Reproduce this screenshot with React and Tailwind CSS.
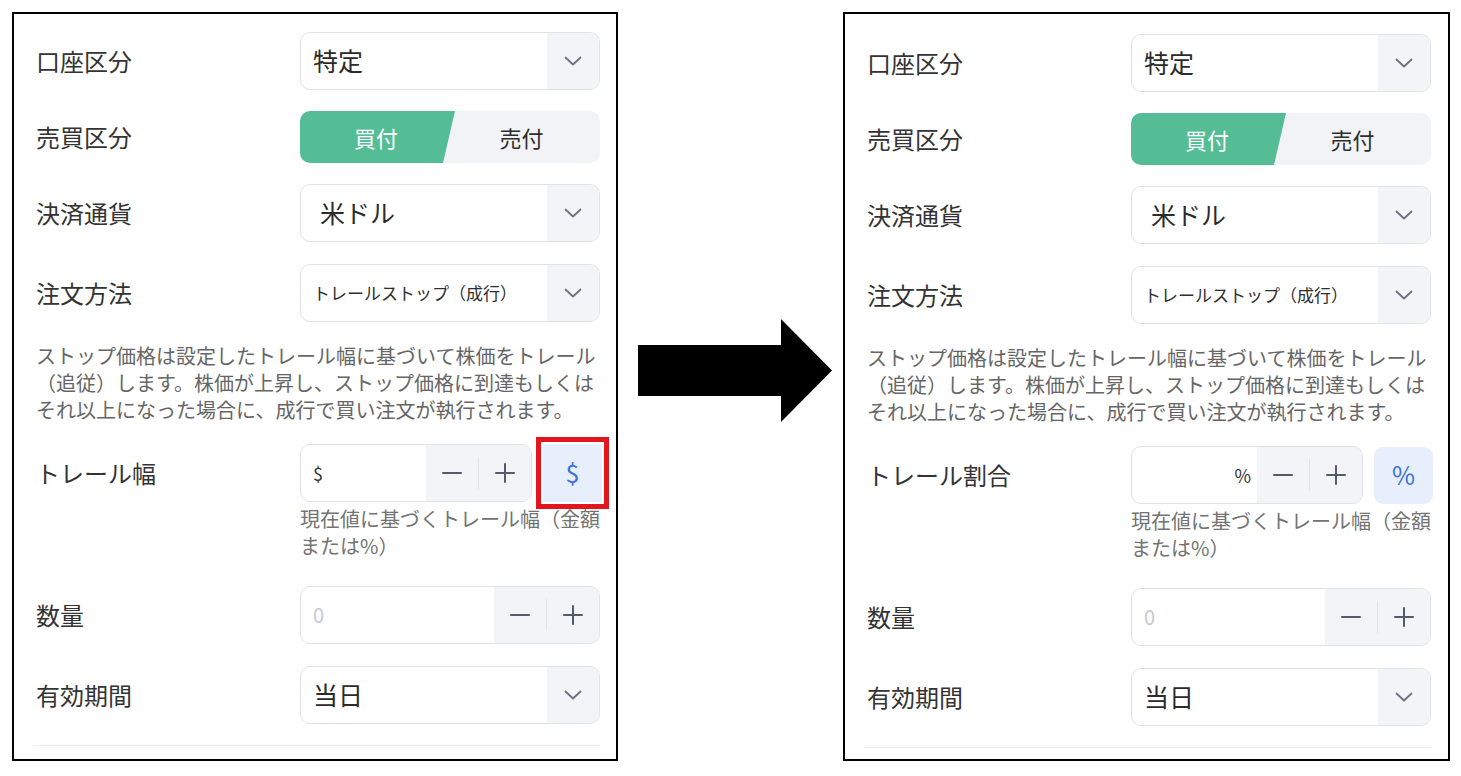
import React from "react";

function Chevron() {
  return (
    <svg width="18" height="10" viewBox="0 0 18 10" fill="none">
      <path d="M1.5 1.5L9 8.5L16.5 1.5" stroke="#6b7280" strokeWidth="1.8" strokeLinecap="round" strokeLinejoin="round" />
    </svg>
  );
}

function Minus() {
  return (
    <svg width="20" height="20" viewBox="0 0 20 20" fill="none">
      <path d="M1 10H19" stroke="#555b66" strokeWidth="2" strokeLinecap="round" />
    </svg>
  );
}

function Plus() {
  return (
    <svg width="20" height="20" viewBox="0 0 20 20" fill="none">
      <path d="M1 10H19M10 1V19" stroke="#555b66" strokeWidth="2" strokeLinecap="round" />
    </svg>
  );
}

function Label({ children }) {
  return <div className="w-[264px] shrink-0 text-[24px] leading-none text-[#333333]">{children}</div>;
}

function Select({ value, small, wide }) {
  return (
    <div className="flex h-[58px] w-[300px] overflow-hidden rounded-[10px] border border-[#e0e2e7] bg-white">
      <div
        className={
          small
            ? "flex flex-1 items-center pl-[12px] text-[17px] text-[#2e2e2e]"
            : wide
            ? "flex flex-1 items-center pl-[19px] text-[25px] text-[#2b2b2b]"
            : "flex flex-1 items-center pl-[12px] text-[25px] text-[#2b2b2b]"
        }
      >
        {value}
      </div>
      <div className="flex w-[52px] items-center justify-center bg-[#f3f4f7]">
        <Chevron />
      </div>
    </div>
  );
}

function Stepper() {
  return (
    <div className="flex w-[105px] items-center bg-[#f3f4f7]">
      <div className="flex flex-1 items-center justify-center">
        <Minus />
      </div>
      <div className="h-[32px] w-px bg-[#e2e4e8]" />
      <div className="flex flex-1 items-center justify-center">
        <Plus />
      </div>
    </div>
  );
}

function Row({ label, children, className }) {
  return (
    <div className={"flex items-center " + className}>
      <Label>{label}</Label>
      {children}
    </div>
  );
}

function Panel({ percent, className }) {
  return (
    <div
      className={
        "h-[749px] shrink-0 border-2 border-black bg-white pl-[22px] pr-[16px] font-['Noto_Sans_CJK_JP','Noto_Sans',sans-serif] " +
        className
      }
    >
      <Row label="口座区分" className="">
        <Select value="特定" />
      </Row>
      <Row label="売買区分" className="mt-[21px]">
        <div className="flex h-[52px] w-[300px] overflow-hidden rounded-[10px] bg-[#f2f3f6]">
          <div className="flex w-[155px] items-center justify-center bg-[#54bd95] pr-[3px] text-[22px] text-white [clip-path:polygon(0_0,100%_0,calc(100%-12px)_100%,0_100%)]">
            買付
          </div>
          <div className="-ml-[12px] flex flex-1 items-center justify-center text-[22px] text-[#2e2e2e]">売付</div>
        </div>
      </Row>
      <Row label="決済通貨" className="mt-[21px]">
        <Select value="米ドル" wide />
      </Row>
      <Row label="注文方法" className="mt-[22px]">
        <Select value="トレールストップ（成行）" small />
      </Row>
      <div className="mt-[20px] whitespace-nowrap text-[20px] leading-[27px] text-[#666666]">
        <div>ストップ価格は設定したトレール幅に基づいて株価をトレール</div>
        <div>（追従）します。株価が上昇し、ストップ価格に到達もしくは</div>
        <div>それ以上になった場合に、成行で買い注文が執行されます。</div>
      </div>
      <Row label={percent ? "トレール割合" : "トレール幅"} className="mt-[21px]">
        <div className="flex items-center gap-[11px]">
          <div className="flex h-[58px] w-[232px] overflow-hidden rounded-[10px] border border-[#e0e2e7] bg-white">
            {percent ? (
              <div className="flex flex-1 items-center justify-end pr-[6px] text-[18px] text-[#333]">%</div>
            ) : (
              <div className="flex flex-1 items-center pl-[12px] text-[18px] text-[#333]">$</div>
            )}
            <Stepper />
          </div>
          {percent ? (
            <div className="flex h-[57px] w-[59px] items-center justify-center rounded-[9px] bg-[#e8effc] text-[25px] text-[#3d72d9]">
              %
            </div>
          ) : (
            <div className="relative flex h-[58px] w-[59px] items-center justify-center bg-[#e8effc] text-[25px] text-[#3d72d9]">
              $
              <div className="absolute -inset-x-[7px] -inset-y-[7px] border-[5px] border-[#e2161d]" />
            </div>
          )}
        </div>
      </Row>
      <div className="ml-[264px] mt-[3px] whitespace-nowrap text-[20px] leading-[27px] text-[#737373]">
        <div>現在値に基づくトレール幅（金額</div>
        <div>または%）</div>
      </div>
      <Row label="数量" className="mt-[27px]">
        <div className="flex h-[58px] w-[300px] overflow-hidden rounded-[10px] border border-[#e0e2e7] bg-white">
          <div className="flex flex-1 items-center pl-[12px] text-[20px] text-[#c6c9cf]">0</div>
          <Stepper />
        </div>
      </Row>
      <Row label="有効期間" className="mt-[22px]">
        <Select value="当日" />
      </Row>
      <div className="-ml-[3px] mt-[21px] h-px w-[567px] bg-[#ececee]" />
    </div>
  );
}

export default function App() {
  return (
    <div className="flex h-[776px] w-[1461px] items-start bg-white">
      <Panel className="ml-[12px] mt-[12px] w-[606px] pt-[18px]" />
      <div className="w-[225px] shrink-0 pl-[20px] pt-[319px]">
        <svg width="194" height="103" viewBox="0 0 194 103">
          <polygon points="0,26 143,26 143,0 194,51.5 143,103 143,77 0,77" fill="#000" />
        </svg>
      </div>
      <Panel percent className="mt-[12px] w-[607px] pt-[20px]" />
    </div>
  );
}
